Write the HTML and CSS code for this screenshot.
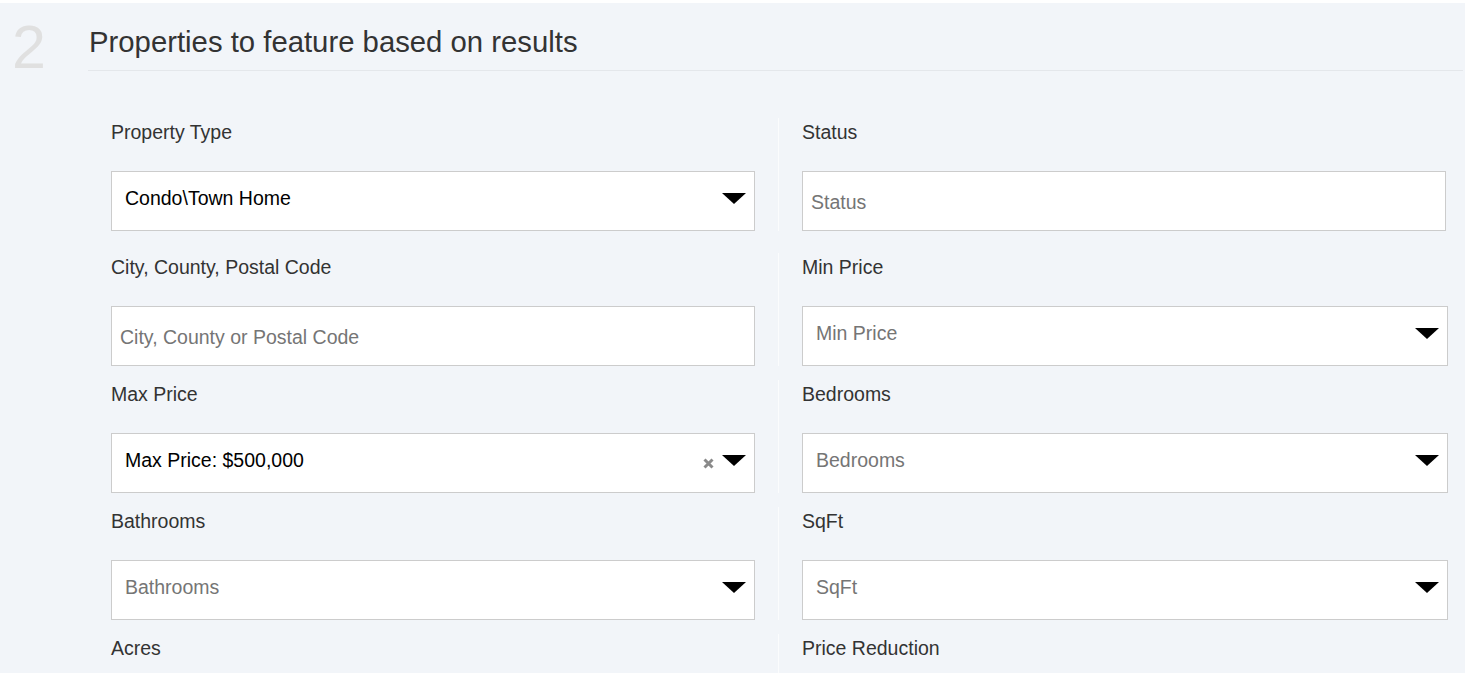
FILE: index.html
```html
<!DOCTYPE html>
<html lang="en">
<head>
<meta charset="utf-8">
<title>Properties to feature</title>
<link rel="stylesheet" href="styles.css">
</head>
<body>
<div class="topbar"></div>
<section class="step">
  <div class="step-head">
    <span class="step-num">2</span>
    <h2 class="step-title">Properties to feature based on results</h2>
  </div>
  <div class="fields">
    <div class="cell cell-left first">
      <label class="lbl">Property Type</label>
      <div class="sel"><span class="sel-value">Condo\Town Home</span><span class="arrow"></span></div>
    </div>
    <div class="cell cell-right first">
      <label class="lbl">Status</label>
      <input class="txt" type="text" placeholder="Status">
    </div>

    <div class="cell cell-left">
      <label class="lbl">City, County, Postal Code</label>
      <input class="txt" type="text" placeholder="City, County or Postal Code">
    </div>
    <div class="cell cell-right">
      <label class="lbl">Min Price</label>
      <div class="sel"><span class="sel-ph">Min Price</span><span class="arrow"></span></div>
    </div>

    <div class="cell cell-left">
      <label class="lbl">Max Price</label>
      <div class="sel"><span class="sel-value">Max Price: $500,000</span>
        <svg class="clear" width="11" height="11" viewBox="0 0 11 11"><path d="M1.5 1.5 L9.5 9.5 M9.5 1.5 L1.5 9.5" stroke="#8a8a8a" stroke-width="3"/></svg>
        <span class="arrow"></span></div>
    </div>
    <div class="cell cell-right">
      <label class="lbl">Bedrooms</label>
      <div class="sel"><span class="sel-ph">Bedrooms</span><span class="arrow"></span></div>
    </div>

    <div class="cell cell-left">
      <label class="lbl">Bathrooms</label>
      <div class="sel"><span class="sel-ph">Bathrooms</span><span class="arrow"></span></div>
    </div>
    <div class="cell cell-right">
      <label class="lbl">SqFt</label>
      <div class="sel"><span class="sel-ph">SqFt</span><span class="arrow"></span></div>
    </div>

    <div class="cell cell-left last">
      <label class="lbl">Acres</label>
    </div>
    <div class="cell cell-right last">
      <label class="lbl">Price Reduction</label>
    </div>
  </div>
</section>
</body>
</html>
```
FILE: styles.css
```css
html, body {
  margin: 0;
  padding: 0;
  overflow: hidden;
}
body {
  background: #f2f5f9;
  font-family: "Liberation Sans", Arial, sans-serif;
  color: #333;
}
.topbar {
  height: 3px;
  background: #ffffff;
}
.step-head {
  display: flex;
  align-items: flex-start;
}
.step-num {
  width: 76px;
  padding-left: 12px;
  margin-top: 13px;
  font-family: "Liberation Sans", Arial, sans-serif;
  font-weight: 400;
  font-size: 61px;
  line-height: 62px;
  color: #e0e0e0;
}
.step-title {
  flex: 1;
  margin: 0 2px 0 0;
  padding: 22px 0 11px 1px;
  font-size: 29.3px;
  line-height: 34px;
  font-weight: 400;
  color: #333;
  border-bottom: 1px solid #e4e7eb;
}
.fields {
  display: grid;
  grid-template-columns: 668px 669px;
  row-gap: 14px;
  margin-top: 40px;
  padding-left: 111px;
}
.cell {
  display: flex;
  flex-direction: column;
  padding-top: 4px;
}
.cell.first {
  margin-bottom: 8px;
}
.cell.last {
  padding-bottom: 40px;
}
.cell-left {
  padding-right: 23px;
  border-right: 1px solid #fbfcfd;
}
.cell-right {
  padding-left: 23px;
}
.lbl {
  font-size: 19.5px;
  line-height: 20px;
  margin-bottom: 29px;
  color: #333;
}
.txt {
  box-sizing: border-box;
  width: 100%;
  height: 60px;
  margin: 0;
  padding: 2px 8px 0 8px;
  border: 1px solid #cccccc;
  border-radius: 0;
  background: #fff;
  font-family: "Liberation Sans", Arial, sans-serif;
  font-size: 19.5px;
  color: #000;
  outline: none;
}
.cell-right .txt {
  width: 644px;
}
.txt::placeholder {
  color: #757575;
}
.sel {
  box-sizing: border-box;
  height: 60px;
  display: flex;
  align-items: center;
  padding: 0 8px 6px 13px;
  border: 1px solid #cccccc;
  background: #fff;
  font-size: 19.5px;
}
.sel-value {
  flex: 1;
  color: #000;
}
.sel-ph {
  flex: 1;
  color: #757575;
}
.clear {
  margin-right: 8px;
  margin-top: 6px;
}
.arrow {
  width: 0;
  height: 0;
  border-left: 12px solid transparent;
  border-right: 12px solid transparent;
  border-top: 11px solid #000;
}
```
